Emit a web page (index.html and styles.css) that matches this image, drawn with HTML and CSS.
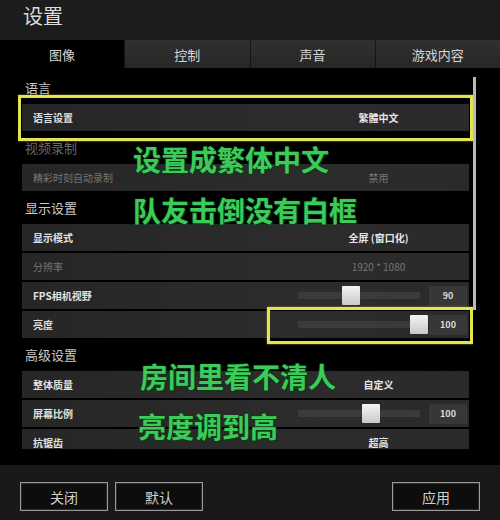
FILE: index.html
```html
<!DOCTYPE html>
<html lang="zh-CN">
<head>
    <meta charset="UTF-8">
    <meta name="viewport" content="width=device-width, initial-scale=1.0">
    <title>设置</title>
    <link rel="stylesheet" href="styles.css">
</head>
<body>
    <div class="window">
        <header class="title-bar">设置</header>

        <nav class="tabs">
            <div class="tab active">图像</div>
            <div class="tab">控制</div>
            <div class="tab">声音</div>
            <div class="tab">游戏内容</div>
        </nav>

        <main class="content">
            <div class="list">
                <div class="group-title">语言</div>
                <div class="row">
                    <span class="label">语言设置</span>
                    <span class="value">繁體中文</span>
                    <span class="mark mark-lang"></span>
                </div>

                <div class="group-title dim">视频录制</div>
                <div class="row dim">
                    <span class="label">精彩时刻自动录制</span>
                    <span class="value">禁用</span>
                </div>

                <div class="group-title">显示设置</div>
                <div class="row">
                    <span class="label">显示模式</span>
                    <span class="value">全屏 (窗口化)</span>
                </div>
                <div class="row dim">
                    <span class="label">分辨率</span>
                    <span class="value">1920 * 1080</span>
                </div>
                <div class="row">
                    <span class="label">FPS相机视野</span>
                    <div class="slider">
                        <div class="track"><div class="thumb" style="left: 44px"></div></div>
                        <div class="num">90</div>
                    </div>
                </div>
                <div class="row">
                    <span class="label">亮度</span>
                    <div class="slider">
                        <div class="track"><div class="thumb" style="left: 112px"></div></div>
                        <div class="num">100</div>
                    </div>
                    <span class="mark mark-bright"></span>
                </div>

                <div class="group-title">高级设置</div>
                <div class="row">
                    <span class="label">整体质量</span>
                    <span class="value">自定义</span>
                </div>
                <div class="row">
                    <span class="label">屏幕比例</span>
                    <div class="slider">
                        <div class="track"><div class="thumb" style="left: 64px"></div></div>
                        <div class="num">100</div>
                    </div>
                </div>
                <div class="row">
                    <span class="label">抗锯齿</span>
                    <span class="value">超高</span>
                </div>
            </div>
            <div class="scrollbar"></div>
        </main>

        <footer class="footer">
            <button class="btn">关闭</button>
            <button class="btn">默认</button>
            <span class="spacer"></span>
            <button class="btn">应用</button>
        </footer>

        <!-- green notes written over the screenshot -->
        <div class="note note-1">设置成繁体中文</div>
        <div class="note note-2">队友击倒没有白框</div>
        <div class="note note-3">房间里看不清人</div>
        <div class="note note-4">亮度调到高</div>
    </div>
</body>
</html>
```

FILE: styles.css
```css
body {
    margin: 0;
    background: #000;
    font-family: "Noto Sans CJK SC", "Noto Sans", sans-serif;
}

.window {
    position: relative;
    width: 500px;
    height: 520px;
    display: flex;
    flex-direction: column;
    background: #000;
    overflow: hidden;
}

.title-bar {
    height: 40px;
    box-sizing: border-box;
    padding: 5px 0 0 23px;
    font-size: 20px;
    line-height: 22px;
    color: #dcdcdc;
    background: #1c1c1c;
}

.tabs {
    display: flex;
    height: 28px;
}

.tab {
    flex: 1;
    display: flex;
    align-items: center;
    justify-content: center;
    font-size: 13px;
    color: #d6d6d6;
    background: linear-gradient(#303030, #272727);
    border-left: 1px solid #151515;
}

.tab.active {
    background: #000;
    border-left: none;
}

.content {
    height: 397px;
    box-sizing: border-box;
    display: flex;
    padding: 0 24px 16px 18px;
    background: #000;
}

/* side padding leaves room for the yellow marks, which stick out of the rows */
.list {
    flex: 1;
    display: flex;
    flex-direction: column;
    gap: 2px;
    padding: 5px 4px 0;
    overflow: hidden;
}

.group-title {
    flex: none;
    height: 29px;
    line-height: 29px;
    padding-left: 3px;
    font-size: 13px;
    color: #c8c8c8;
}

.group-title.dim {
    color: #6a6a6a;
}

.row {
    position: relative;
    flex: none;
    height: 27px;
    display: flex;
    align-items: center;
    background: linear-gradient(90deg, #262626, #2c2c2c 60%, #2a2a2a);
}

.label {
    flex: 1;
    padding-left: 11px;
    font-size: 10px;
    font-weight: bold;
    color: #e0e0e0;
}

.value {
    width: 181px;
    text-align: center;
    font-size: 10px;
    font-weight: bold;
    color: #e6e6e6;
}

.row.dim .label,
.row.dim .value {
    color: #767676;
    font-weight: normal;
}

.slider {
    width: 181px;
    box-sizing: border-box;
    padding-left: 10px;
    display: flex;
    align-items: center;
}

.track {
    position: relative;
    width: 122px;
    height: 7px;
    background: #3b3b3b;
}

.thumb {
    position: absolute;
    top: -6px;
    width: 18px;
    height: 19px;
    border-radius: 1px;
    background: linear-gradient(#f4f4f4, #c9c9c9);
}

.num {
    width: 38px;
    height: 20px;
    margin-left: 9px;
    line-height: 20px;
    text-align: center;
    font-size: 9px;
    font-weight: bold;
    color: #dcdcdc;
    background: #373737;
}

.mark {
    position: absolute;
    border: 3px solid #e4e44e;
    box-shadow: 0 0 2px #8a8a20;
}

.mark-lang {
    top: -9px;
    bottom: -10px;
    left: -4px;
    right: -4px;
}

.mark-bright {
    top: -4px;
    bottom: -6px;
    left: 245px;
    right: -4px;
}

.scrollbar {
    width: 3px;
    height: 233px;
    margin-top: 9px;
    background: #b9b9b9;
}

.footer {
    flex: 1;
    display: flex;
    align-items: flex-start;
    gap: 7px;
    padding: 17px 20px 0;
    background: #1b1918;
}

.spacer {
    flex: 1;
}

.btn {
    width: 88px;
    height: 29px;
    font-family: inherit;
    font-size: 14px;
    color: #cfcfcf;
    background: #0d0d0d;
    border: 1px solid #9a9a9a;
    box-shadow: inset 0 0 0 1px #2a2a2a;
}

.note {
    position: absolute;
    font-size: 28px;
    font-weight: bold;
    line-height: 1;
    color: #3ccb5a;
    text-shadow: 0 0 2px #0b3d16, 1px 1px 1px #0b3d16;
}

.note-1 { left: 133px; top: 145px; }
.note-2 { left: 133px; top: 196px; }
.note-3 { left: 140px; top: 362px; }
.note-4 { left: 138px; top: 412px; }
```
